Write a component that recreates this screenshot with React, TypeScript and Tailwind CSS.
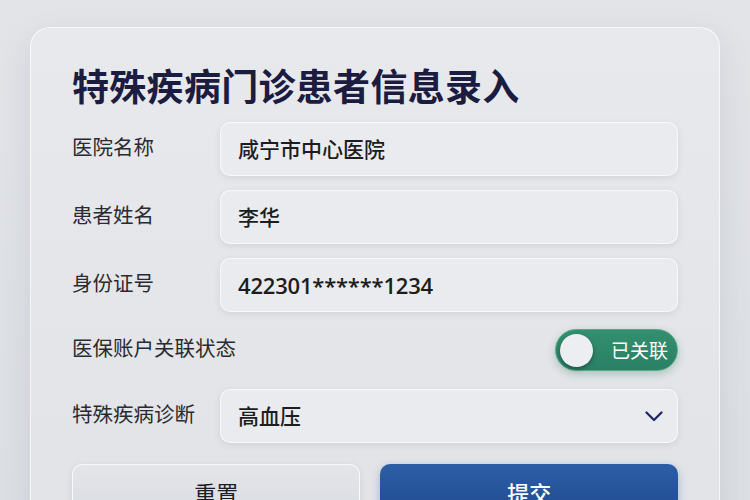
const font = { fontFamily: '"Noto Sans CJK SC", "Noto Sans", sans-serif' }

function Field({ label, value, latin }: { label: string; value: string; latin?: boolean }) {
  return (
    <div className="flex items-center">
      <div className="w-[148px] pb-[6px] text-[20.5px] text-[#2a2b2f]">{label}</div>
      <div className="flex h-[54px] flex-1 items-center rounded-[10px] border border-white/70 bg-[#eaebee] px-[17px] text-[21px] font-medium text-[#1c1d21] shadow-[0_2px_6px_rgba(120,125,140,0.18)]">
        {latin ? (
          <span className="font-['Open_Sans',sans-serif] text-[22px] font-semibold tracking-[-0.2px]">{value}</span>
        ) : (
          value
        )}
      </div>
    </div>
  )
}

export default function App() {
  return (
    <div
      className="h-[500px] w-[750px] overflow-hidden bg-gradient-to-b from-[#e2e4e8] to-[#dcdfe4] pt-[27px]"
      style={font}
    >
      <div className="mx-[30px] h-[520px] rounded-[20px] border border-white/70 bg-gradient-to-b from-[#e8e9ec] to-[#e1e3e7] px-[41px] pt-[35px] shadow-[0_10px_30px_rgba(100,105,120,0.15)]">
        <h1 className="text-[37px] font-bold leading-[44px] tracking-[0.3px] text-[#1b1c3f]">
          特殊疾病门诊患者信息录入
        </h1>

        <div className="mt-[15px] flex flex-col gap-[14px]">
          <Field label="医院名称" value="咸宁市中心医院" />
          <Field label="患者姓名" value="李华" />
          <Field label="身份证号" value="422301******1234" latin />
        </div>

        <div className="mt-[17px] flex items-center justify-between">
          <div className="pb-[6px] text-[20.5px] text-[#2a2b2f]">医保账户关联状态</div>
          <div className="flex h-[42px] w-[123px] items-center justify-between rounded-full border border-[#5aa88a] bg-gradient-to-b from-[#338f70] to-[#2a8064] pl-[4px] pr-[9px] shadow-[0_3px_8px_rgba(40,110,85,0.3)]">
            <div className="h-[33px] w-[33px] rounded-full bg-[#eceef1] shadow-[0_2px_4px_rgba(0,0,0,0.35)]" />
            <span className="text-[19px] text-white">已关联</span>
          </div>
        </div>

        <div className="mt-[18px] flex items-center">
          <div className="w-[148px] pb-[6px] text-[20.5px] text-[#2a2b2f]">特殊疾病诊断</div>
          <div className="flex h-[54px] flex-1 items-center justify-between rounded-[10px] border border-white/70 bg-[#eaebee] pl-[17px] pr-[14px] text-[21px] font-medium text-[#1c1d21] shadow-[0_2px_6px_rgba(120,125,140,0.18)]">
            高血压
            <svg width="18" height="11" viewBox="0 0 18 11" fill="none" className="text-[#25266a]">
              <polyline
                points="1.5,1.5 9,9 16.5,1.5"
                stroke="currentColor"
                strokeWidth="2.3"
                strokeLinecap="round"
                strokeLinejoin="round"
              />
            </svg>
          </div>
        </div>

        <div className="mt-[21px] flex gap-[20px]">
          <button className="h-[56px] flex-1 rounded-[10px] border border-white/80 bg-gradient-to-b from-[#e3e5e9] to-[#d9dce1] text-[22px] text-[#1c1d21] shadow-[0_2px_6px_rgba(120,125,140,0.2)]">
            重置
          </button>
          <button className="h-[56px] flex-[1.04] rounded-[10px] bg-gradient-to-b from-[#2d5ea6] to-[#1f4a8e] text-[22px] font-medium text-white shadow-[0_3px_8px_rgba(30,70,140,0.3)]">
            提交
          </button>
        </div>
      </div>
    </div>
  )
}
